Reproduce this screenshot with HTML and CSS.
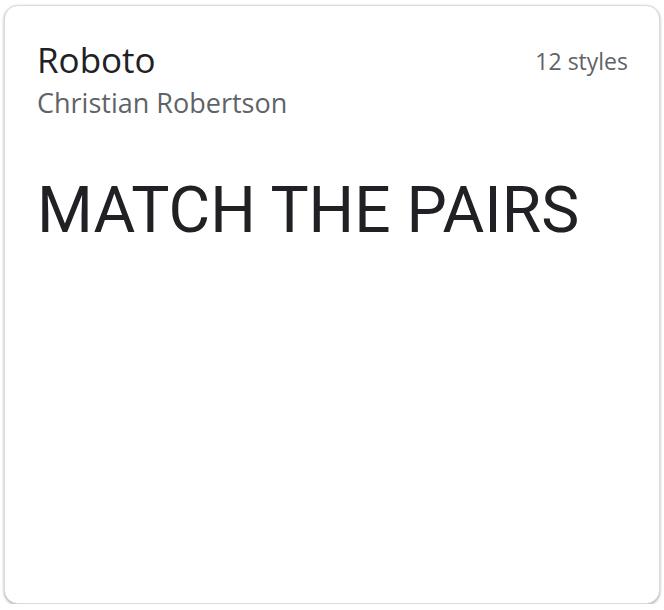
FILE: index.html
```html
<!DOCTYPE html>
<html>
<head>
<meta charset="utf-8">
<link rel="stylesheet" href="styles.css">
</head>
<body>
<div class="card">
  <div class="card-head">
    <div class="meta">
      <div class="family">Roboto</div>
      <div class="designer">Christian Robertson</div>
    </div>
    <div class="styles">12 styles</div>
  </div>
  <div class="sample">MATCH THE PAIRS</div>
</div>
</body>
</html>
```
FILE: styles.css
```css
html, body {
  margin: 0;
  padding: 0;
  background: #ffffff;
}
body {
  padding: 5px 4px 0 4px;
}
.card {
  box-sizing: border-box;
  width: 656px;
  height: 599px;
  border: 1px solid #dadce0;
  border-radius: 14px;
  box-shadow: 0 1px 2px rgba(60, 64, 67, 0.3), 0 1px 3px 1px rgba(60, 64, 67, 0.12);
  background: #fff;
  padding: 34px 31px 0 32px;
}
.card-head {
  display: flex;
  justify-content: space-between;
  align-items: flex-start;
}
.family {
  font-family: "Open Sans", sans-serif;
  font-size: 35px;
  line-height: 40px;
  color: #202124;
}
.designer {
  margin-top: 7px;
  font-family: "Open Sans", sans-serif;
  font-size: 27px;
  line-height: 32px;
  color: #5f6368;
}
.styles {
  margin-top: 1px;
  font-family: "Open Sans", sans-serif;
  font-size: 23px;
  line-height: 40px;
  color: #5f6368;
}
.sample {
  margin-top: 52px;
  font-family: Roboto, sans-serif;
  font-size: 64px;
  line-height: 80px;
  color: #202124;
}
```
